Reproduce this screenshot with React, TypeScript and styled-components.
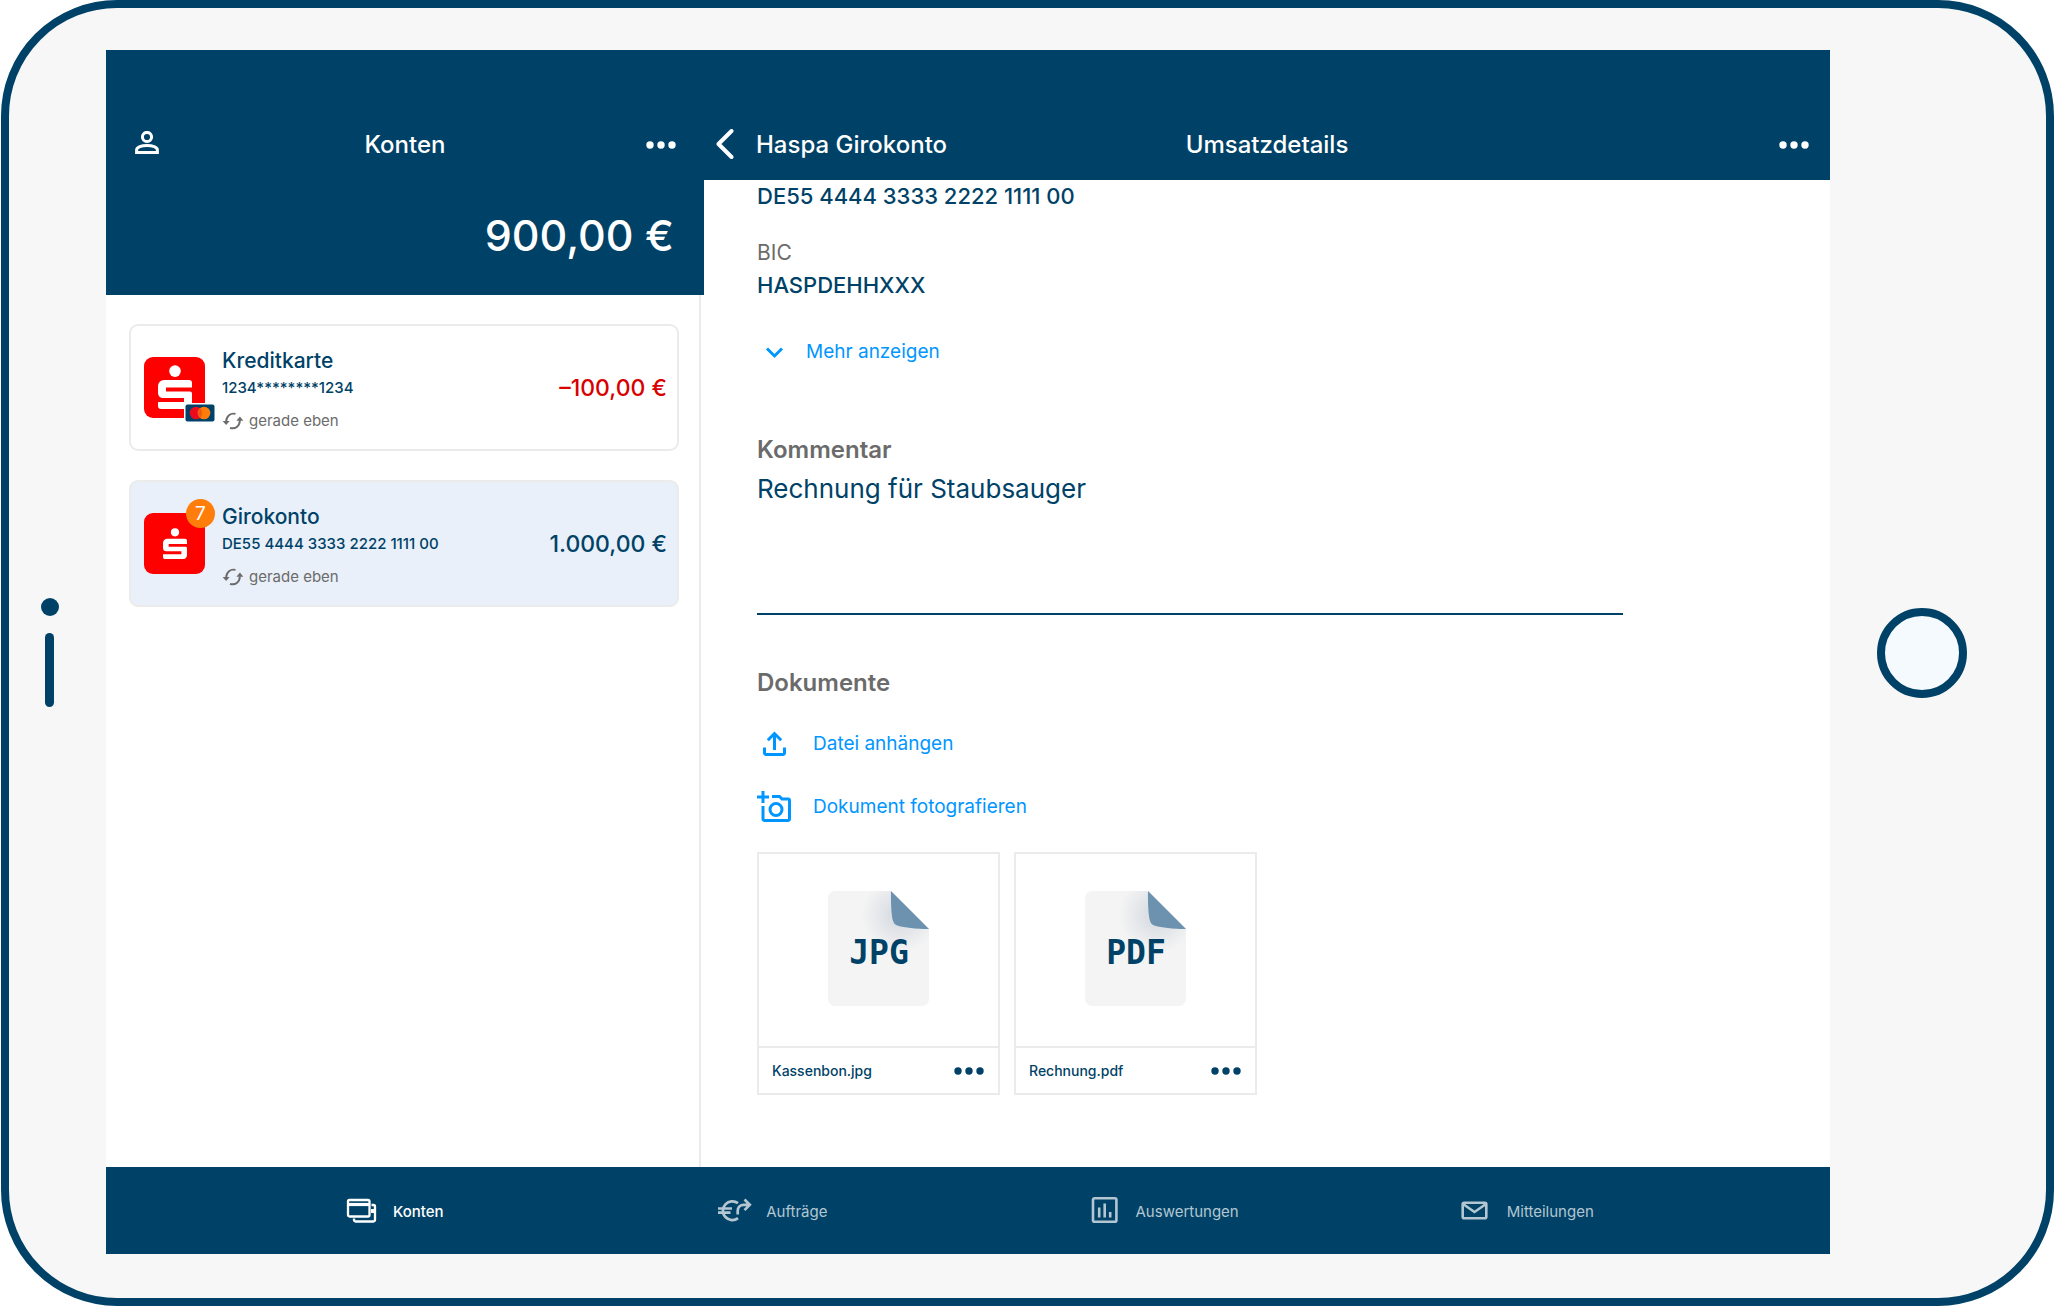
import React from 'react';
import styled, { createGlobalStyle } from 'styled-components';

const color = {
  navy: '#004267',
  bezel: '#f7f7f7',
  line: '#ebebeb',
  grey: '#6b6b6b',
  blue: '#0096ff',
  red: '#d90000',
  brand: '#ff0000',
  orange: '#ff7d0a',
  selected: '#e9f0f9',
  muted: '#b3c6d1',
};

const GlobalStyle = createGlobalStyle`
  *, *::before, *::after { box-sizing: border-box; }
  body { margin: 0; background: #fff; }
  body, button, textarea { font-family: Inter, "Liberation Sans", sans-serif; }
  h1, h2, p, ul { margin: 0; padding: 0; }
  ul { list-style: none; }
  svg { display: block; flex: none; }
`;

/* ---------- Device ---------- */

const Device = styled.div`
  min-height: 100vh;
  margin-left: 1px;
  display: grid;
  grid-template-columns: 97px minmax(0, 1fr) 216px;
  padding: 42px 0 44px;
  border: 8px solid ${color.navy};
  border-radius: 116px;
  background: ${color.bezel};
`;

const CameraSide = styled.div`
  display: flex;
  flex-direction: column;
  align-items: center;
  justify-content: center;
  gap: 17px;
  padding-right: 16px;
`;

const Lens = styled.span`
  width: 18px;
  height: 18px;
  border-radius: 50%;
  background: ${color.navy};
`;

const Speaker = styled.span`
  width: 9px;
  height: 74px;
  border-radius: 5px;
  background: ${color.navy};
`;

const HomeSide = styled.div`
  display: flex;
  align-items: center;
  padding: 2px 0 0 47px;
`;

const HomeButton = styled.button`
  width: 90px;
  height: 90px;
  border: 8px solid ${color.navy};
  border-radius: 50%;
  background: #f5faff;
`;

/* ---------- App shell ---------- */

const Screen = styled.div`
  display: flex;
  flex-direction: column;
  background: #fff;
`;

const Panes = styled.div`
  flex: 1;
  display: grid;
  grid-template-columns: 598px minmax(0, 1fr);
`;

const Pane = styled.section`
  display: flex;
  flex-direction: column;
  min-width: 0;
`;

const TopBar = styled.header<{ $side: number }>`
  display: grid;
  grid-template-columns: 1fr auto 1fr;
  align-items: center;
  height: 130px;
  padding: 59px ${(p) => p.$side}px 0;
  background: ${color.navy};
  color: #fff;
`;

const BarTitle = styled.h1`
  font-size: 24px;
  line-height: 32px;
  font-weight: 500;
`;

const IconButton = styled.button<{ $end?: boolean; $inset?: number }>`
  display: flex;
  align-items: center;
  padding: 0;
  border: 0;
  background: none;
  color: inherit;
  justify-self: ${(p) => (p.$end ? 'end' : 'start')};
  margin-right: ${(p) => p.$inset ?? 0}px;
`;

const BackButton = styled(IconButton)`
  gap: 22px;
  font-size: 24px;
  line-height: 32px;
  font-weight: 500;
`;

/* ---------- Accounts ---------- */

const Total = styled.p`
  height: 115px;
  padding: 29px 30px 0 0;
  background: ${color.navy};
  color: #fff;
  font-size: 43px;
  line-height: 52px;
  font-weight: 500;
  text-align: right;
`;

const AccountList = styled.ul`
  flex: 1;
  display: flex;
  flex-direction: column;
  gap: 29px;
  margin-right: 3px;
  padding: 29px 20px 29px 23px;
  border-right: 2px solid ${color.line};
`;

const AccountCard = styled.button<{ $selected?: boolean }>`
  display: flex;
  align-items: center;
  width: 100%;
  height: 127px;
  padding: 0 10px 0 13px;
  border: 2px solid ${color.line};
  border-radius: 9px;
  background: ${(p) => (p.$selected ? color.selected : '#fff')};
  color: ${color.navy};
  text-align: left;
`;

const Avatar = styled.span`
  position: relative;
  display: flex;
  flex: none;
  align-items: center;
  justify-content: center;
  width: 61px;
  height: 61px;
  border-radius: 9px;
  background: ${color.brand};
`;

const CountBadge = styled.span`
  position: absolute;
  top: -14px;
  right: -10px;
  width: 29px;
  height: 29px;
  border-radius: 50%;
  background: ${color.orange};
  color: #fff;
  font-size: 19px;
  line-height: 29px;
  text-align: center;
`;

const CardBadge = styled.span`
  position: absolute;
  right: -11px;
  bottom: -5px;
`;

const AccountText = styled.span`
  flex: 1;
  display: flex;
  flex-direction: column;
  margin: 4px 0 0 17px;
`;

const AccountName = styled.span`
  font-size: 21px;
  line-height: 28px;
  font-weight: 500;
`;

const AccountNumber = styled.span`
  margin-top: 3px;
  font-size: 15px;
  line-height: 20px;
  font-weight: 500;
`;

const SyncState = styled.span`
  display: flex;
  align-items: center;
  gap: 5px;
  margin-top: 11px;
  color: ${color.grey};
  font-size: 15px;
  line-height: 24px;
`;

const Amount = styled.span<{ $negative?: boolean }>`
  color: ${(p) => (p.$negative ? color.red : 'inherit')};
  font-size: 23px;
  line-height: 28px;
  font-weight: 500;
`;

/* ---------- Details ---------- */

const Details = styled.div`
  display: flex;
  flex-direction: column;
  align-items: flex-start;
  padding: 0 207px 40px 53px;
`;

const FieldLabel = styled.p`
  margin-top: 25px;
  color: ${color.grey};
  font-size: 21px;
  line-height: 32px;
`;

const FieldValue = styled.p`
  color: ${color.navy};
  font-size: 22px;
  line-height: 32px;
  font-weight: 500;
`;

const LinkButton = styled.button<{ $top: number; $gap: number }>`
  display: flex;
  align-items: center;
  gap: ${(p) => p.$gap}px;
  margin-top: ${(p) => p.$top}px;
  padding: 0;
  border: 0;
  background: none;
  color: ${color.blue};
  font-size: 19px;
  line-height: 32px;
`;

const SectionLabel = styled.label`
  margin-top: 66px;
  color: ${color.grey};
  font-size: 24px;
  line-height: 32px;
  font-weight: 600;
`;

const SectionTitle = styled.h2`
  margin-top: 52px;
  color: ${color.grey};
  font-size: 24px;
  line-height: 32px;
  font-weight: 600;
`;

const Comment = styled.textarea`
  width: 100%;
  height: 149px;
  padding: 0;
  border: 0;
  border-bottom: 2px solid ${color.navy};
  outline: 0;
  resize: none;
  background: none;
  color: ${color.navy};
  font-size: 26px;
  line-height: 46px;
`;

const Files = styled.ul`
  display: flex;
  flex-wrap: wrap;
  gap: 14px;
  margin-top: 29px;
`;

const FileCard = styled.li`
  width: 243px;
  border: 2px solid ${color.line};
  color: ${color.navy};
`;

const Preview = styled.div`
  display: flex;
  justify-content: center;
  height: 192px;
  padding-top: 37px;
`;

const FileFooter = styled.div`
  display: flex;
  align-items: center;
  justify-content: space-between;
  height: 47px;
  padding: 0 14px 0 13px;
  border-top: 2px solid ${color.line};
  font-size: 14px;
  line-height: 20px;
  font-weight: 500;
`;

/* ---------- Tab bar ---------- */

const TabBar = styled.nav`
  display: grid;
  grid-template-columns: repeat(4, 1fr);
  height: 87px;
  padding-left: 239px;
  background: ${color.navy};
`;

const Tab = styled.button<{ $active?: boolean }>`
  display: flex;
  align-items: center;
  gap: 14px;
  padding: 2px 0 0;
  border: 0;
  background: none;
  color: ${(p) => (p.$active ? '#fff' : color.muted)};
  font-size: 15px;
  line-height: 24px;
  font-weight: ${(p) => (p.$active ? 500 : 400)};
`;

/* ---------- Icons ---------- */

const Dots = () => (
  <svg width="30" height="8" viewBox="0 0 30 8" fill="currentColor" aria-hidden="true">
    <circle cx="4" cy="4" r="3.7" />
    <circle cx="15" cy="4" r="3.7" />
    <circle cx="26" cy="4" r="3.7" />
  </svg>
);

const PersonIcon = () => (
  <svg width="26" height="28" viewBox="0 0 26 28" fill="none" stroke="currentColor" strokeWidth="3" aria-hidden="true">
    <circle cx="13" cy="6" r="4.600" />
    <path d="M2.600 21.500v-2.500c0-2.800 5-4.600 10.400-4.600s10.400 1.800 10.400 4.600v2.500z" />
  </svg>
);

const BackIcon = () => (
  <svg width="18" height="32" viewBox="0 0 18 32" fill="none" stroke="currentColor" strokeWidth="4" strokeLinecap="round" strokeLinejoin="round" aria-hidden="true">
    <path d="M15.500 2 2.500 15l13 13" />
  </svg>
);

const ChevronDown = () => (
  <svg width="34" height="24" viewBox="0 0 34 24" fill="none" stroke="currentColor" strokeWidth="3" aria-hidden="true">
    <path d="m10 8.500 7.500 7.500L25 8.500" />
  </svg>
);

const UploadIcon = () => (
  <svg width="34" height="32" viewBox="0 0 34 32" fill="none" stroke="currentColor" strokeWidth="3" aria-hidden="true">
    <path d="M17.500 22V6M10.800 12.200l6.700-6.700 6.700 6.700" />
    <path d="M7.500 19.500v5.500a1.500 1.500 0 0 0 1.500 1.500h17a1.500 1.500 0 0 0 1.500-1.500v-5.500" />
  </svg>
);

const PhotoIcon = () => (
  <svg width="34" height="32" viewBox="0 0 34 32" fill="none" stroke="currentColor" strokeWidth="3" aria-hidden="true">
    <path d="M6 0v12M0 6h12" />
    <path d="M6 15v13a1.500 1.500 0 0 0 1.500 1.500h23.500a1.500 1.500 0 0 0 1.500-1.500v-18.500a1.500 1.500 0 0 0-1.500-1.500h-6l-2.500-2.500h-7.500" />
    <circle cx="19" cy="18.500" r="6" />
  </svg>
);

const SyncIcon = () => (
  <svg width="22" height="18" viewBox="0 0 22 18" fill="none" stroke="currentColor" strokeWidth="1.900" aria-hidden="true">
    <path d="M13.500 1.900C8.500.6 4.300 4 4.100 9.500" />
    <path d="M8 15.800c5.200 1.800 9.700-1.500 9.900-7.500" />
    <path d="M.6 9h7L4.100 13z" fill="currentColor" stroke="none" />
    <path d="M14.400 8.700h7L17.900 4.600z" fill="currentColor" stroke="none" />
  </svg>
);

const BrandSign = ({ size }: { size: number }) => (
  <svg width={size} height={size * 1.3} viewBox="0 0 34 44" fill="#fff" aria-hidden="true">
    <circle cx="17" cy="6" r="5.800" />
    <path d="M6 15h25a3 3 0 0 1 3 3v4.500H8v4h24a2 2 0 0 1 2 2V38a6 6 0 0 1-6 6H3a3 3 0 0 1-3-3v-4h26v-4H5a5 5 0 0 1-5-5v-7a6 6 0 0 1 6-6z" />
  </svg>
);

const Mastercard = () => (
  <svg width="32" height="20" viewBox="0 0 32 20" aria-hidden="true">
    <rect x="0" y="0" width="32" height="20" rx="3" fill="#fff" />
    <rect x="1.500" y="1.500" width="29" height="17" rx="2" fill={color.navy} />
    <circle cx="12" cy="10" r="6.300" fill="#eb0a1e" />
    <circle cx="20" cy="10" r="6.300" fill={color.orange} />
    <path d="M16 5.100a6.300 6.300 0 0 1 0 9.800 6.300 6.300 0 0 1 0-9.800z" fill="#f25a10" />
  </svg>
);

const FileIcon = ({ type }: { type: string }) => (
  <svg width="101" height="115" viewBox="0 0 101 115" role="img" aria-label={type}>
    <defs>
      <radialGradient id={`shade-${type}`} cx="72" cy="24" r="38" gradientUnits="userSpaceOnUse">
        <stop offset="0.300" stopColor="#dce0e5" />
        <stop offset="1" stopColor="#f4f4f4" />
      </radialGradient>
    </defs>
    <path d="M7 0h56l38 38v70a7 7 0 0 1-7 7H7a7 7 0 0 1-7-7V7a7 7 0 0 1 7-7z" fill={`url(#shade-${type})`} />
    <path d="M63 0l38 38c-14-.3-24-1.300-31-3.300-3-.8-4-2-5-5C63.500 25 62.800 14 63 0z" fill="#6c92af" />
    <text x="51" y="73" textAnchor="middle" fontFamily="'DejaVu Sans Mono', monospace" fontWeight="700" fontSize="33" fill={color.navy}>
      {type}
    </text>
  </svg>
);

const CardsIcon = () => (
  <svg width="34" height="34" viewBox="0 0 34 34" fill="none" stroke="currentColor" strokeWidth="2.300" aria-hidden="true">
    <rect x="3" y="5" width="21.500" height="16.500" rx="1.500" />
    <path d="M3 9.500h21.500" strokeWidth="3.200" />
    <path d="M26.500 10h2a1.500 1.500 0 0 1 1.500 1.500v13.500a1.500 1.500 0 0 1-1.500 1.500H10.500a1.500 1.500 0 0 1-1.500-1.500v-1.500" />
    <path d="M26 14h4v4h-4z" fill="currentColor" stroke="none" />
  </svg>
);

const EuroArrowIcon = () => (
  <svg width="36" height="34" viewBox="0 0 36 34" fill="none" stroke="currentColor" strokeWidth="2.700" aria-hidden="true">
    <path d="M22 8.200a9.400 9.400 0 1 0 0 15M2 13.500h14M2 17.700h12.500" />
    <path d="M21.700 19.500v-3.500c0-4 2.500-6.200 6-6.200h6M28.500 4.500l5.300 5.300-5.300 5.300" />
  </svg>
);

const ChartIcon = () => (
  <svg width="34" height="34" viewBox="0 0 34 34" fill="none" stroke="currentColor" strokeWidth="2.600" aria-hidden="true">
    <rect x="5" y="3.300" width="23.400" height="23.400" rx="1.500" />
    <path d="M11.200 12.500v10M16.700 8.500v14M22.200 17v5.500" />
  </svg>
);

const MailIcon = () => (
  <svg width="34" height="34" viewBox="0 0 34 34" fill="none" stroke="currentColor" strokeWidth="2.600" aria-hidden="true">
    <rect x="3.700" y="7.700" width="23.600" height="15.600" rx="1.500" />
    <path d="m4 9 11.500 8L27 9" />
  </svg>
);

/* ---------- Data ---------- */

interface Account {
  name: string;
  number: string;
  amount: string;
  negative?: boolean;
  selected?: boolean;
  unread?: number;
}

const accounts: Account[] = [
  { name: 'Kreditkarte', number: '1234********1234', amount: '–100,00 €', negative: true },
  { name: 'Girokonto', number: 'DE55 4444 3333 2222 1111 00', amount: '1.000,00 €', selected: true, unread: 7 },
];

const files = [
  { name: 'Kassenbon.jpg', type: 'JPG' },
  { name: 'Rechnung.pdf', type: 'PDF' },
];

const tabs = [
  { label: 'Konten', Icon: CardsIcon },
  { label: 'Aufträge', Icon: EuroArrowIcon },
  { label: 'Auswertungen', Icon: ChartIcon },
  { label: 'Mitteilungen', Icon: MailIcon },
];

export default function App() {
  return (
    <>
      <GlobalStyle />
      <Device>
        <CameraSide>
          <Lens />
          <Speaker />
        </CameraSide>

        <Screen>
          <Panes>
            <Pane>
              <TopBar $side={28}>
                <IconButton aria-label="Profil">
                  <PersonIcon />
                </IconButton>
                <BarTitle>Konten</BarTitle>
                <IconButton $end aria-label="Mehr">
                  <Dots />
                </IconButton>
              </TopBar>
              <Total>900,00 €</Total>
              <AccountList>
                {accounts.map((a) => (
                  <li key={a.name}>
                    <AccountCard $selected={a.selected}>
                      <Avatar>
                        <BrandSign size={a.unread ? 24 : 34} />
                        {a.unread ? (
                          <CountBadge>{a.unread}</CountBadge>
                        ) : (
                          <CardBadge>
                            <Mastercard />
                          </CardBadge>
                        )}
                      </Avatar>
                      <AccountText>
                        <AccountName>{a.name}</AccountName>
                        <AccountNumber>{a.number}</AccountNumber>
                        <SyncState>
                          <SyncIcon />
                          gerade eben
                        </SyncState>
                      </AccountText>
                      <Amount $negative={a.negative}>{a.amount}</Amount>
                    </AccountCard>
                  </li>
                ))}
              </AccountList>
            </Pane>

            <Pane>
              <TopBar $side={12}>
                <BackButton>
                  <BackIcon />
                  Haspa Girokonto
                </BackButton>
                <BarTitle>Umsatzdetails</BarTitle>
                <IconButton $end $inset={9} aria-label="Mehr">
                  <Dots />
                </IconButton>
              </TopBar>
              <Details>
                <FieldValue>DE55 4444 3333 2222 1111 00</FieldValue>
                <FieldLabel>BIC</FieldLabel>
                <FieldValue>HASPDEHHXXX</FieldValue>
                <LinkButton $top={35} $gap={15}>
                  <ChevronDown />
                  Mehr anzeigen
                </LinkButton>
                <SectionLabel htmlFor="comment">Kommentar</SectionLabel>
                <Comment id="comment" defaultValue="Rechnung für Staubsauger" />
                <SectionTitle>Dokumente</SectionTitle>
                <LinkButton $top={29} $gap={22}>
                  <UploadIcon />
                  Datei anhängen
                </LinkButton>
                <LinkButton $top={31} $gap={22}>
                  <PhotoIcon />
                  Dokument fotografieren
                </LinkButton>
                <Files>
                  {files.map((f) => (
                    <FileCard key={f.name}>
                      <Preview>
                        <FileIcon type={f.type} />
                      </Preview>
                      <FileFooter>
                        {f.name}
                        <IconButton aria-label={`Mehr zu ${f.name}`}>
                          <Dots />
                        </IconButton>
                      </FileFooter>
                    </FileCard>
                  ))}
                </Files>
              </Details>
            </Pane>
          </Panes>

          <TabBar>
            {tabs.map(({ label, Icon }, i) => (
              <Tab key={label} $active={i === 0}>
                <Icon />
                {label}
              </Tab>
            ))}
          </TabBar>
        </Screen>

        <HomeSide>
          <HomeButton aria-label="Home" />
        </HomeSide>
      </Device>
    </>
  );
}
